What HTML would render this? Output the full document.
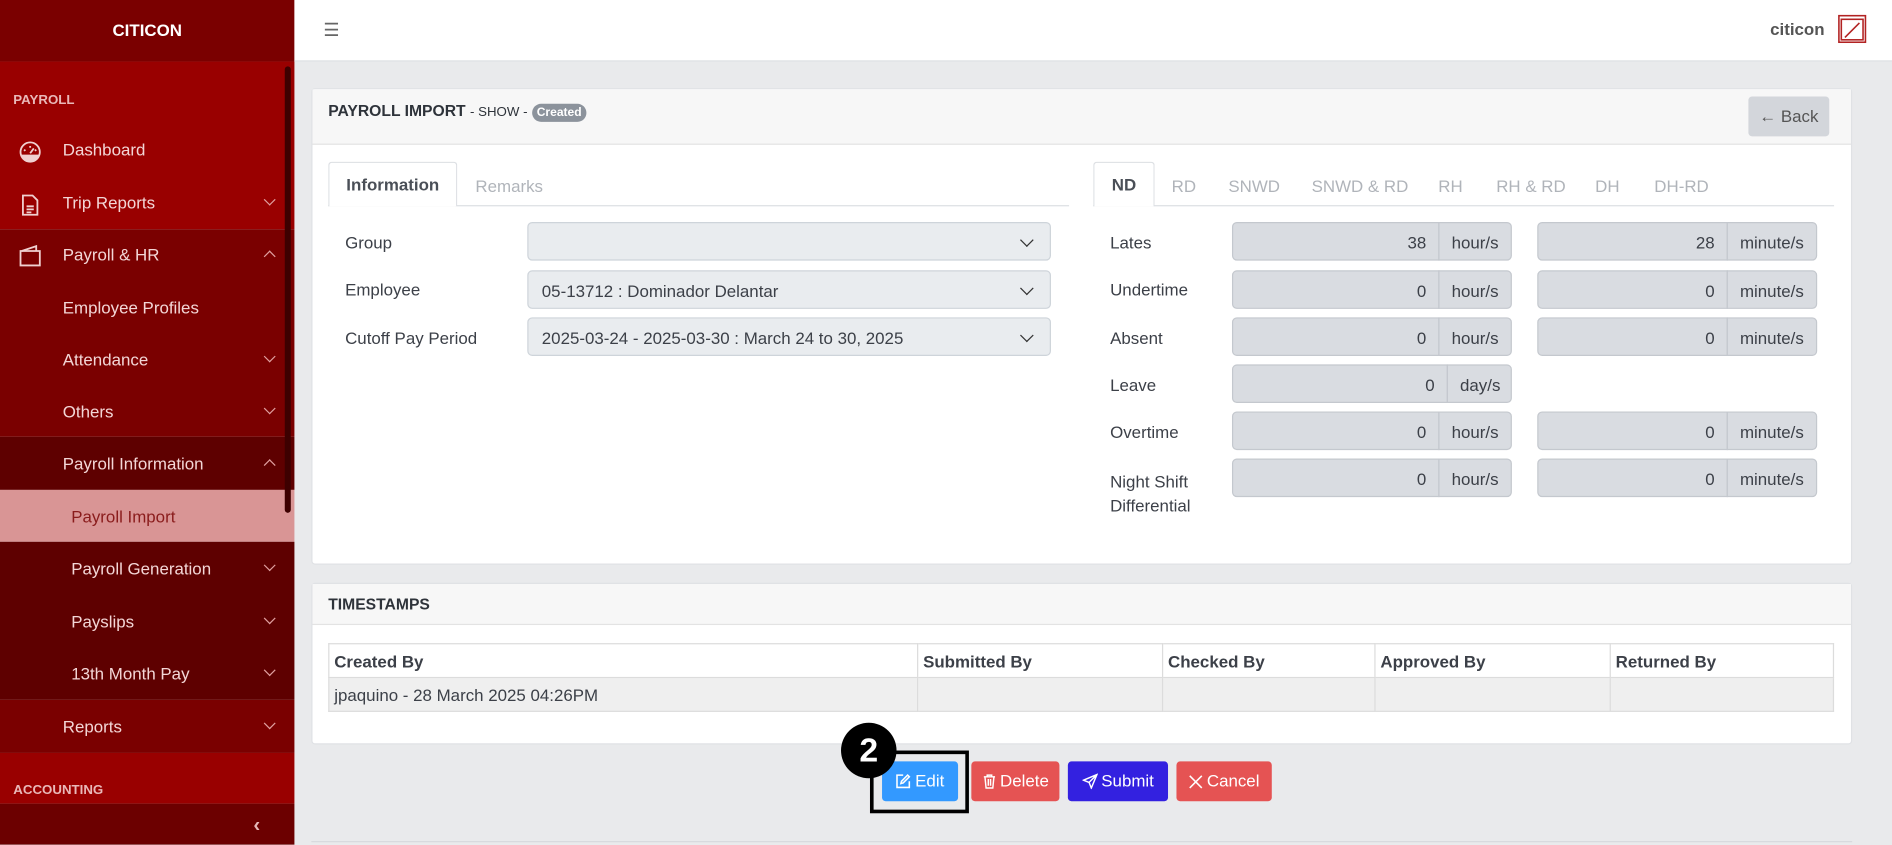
<!DOCTYPE html>
<html><head><meta charset="utf-8"><style>
*{box-sizing:border-box;margin:0;padding:0}
html,body{width:1892px;height:845px;overflow:hidden;background:#e9eaec;font-family:"Liberation Sans",sans-serif}
#w{position:absolute;left:0;top:0;width:1568px;height:700px;transform:scale(1.20663);transform-origin:0 0}
.a{position:absolute}
.sb div.r{position:absolute;left:0;width:244px}
.mi{position:absolute;color:#f3d6d6;font-size:14px}
.chev{position:absolute;left:220px;width:7px;height:7px;border-right:1px solid #e0a0a0;border-bottom:1px solid #e0a0a0}
.dn{transform:rotate(45deg)}
.up{transform:rotate(-135deg)}
.lbl{position:absolute;font-size:14px;color:#3c4048}
.sel{position:absolute;left:437px;width:434px;height:32px;background:#e9ecef;border:1px solid #ced4da;border-radius:4px;font-size:14px;color:#3c4048;padding:8px 11px}
.sel:after{content:"";position:absolute;right:15px;top:10px;width:7px;height:7px;border-right:1.5px solid #333;border-bottom:1.5px solid #333;transform:rotate(45deg)}
.in{position:absolute;height:32px;background:#d9dce1;border:1px solid #c4c8ce;font-size:14px;color:#3c4048;padding:8px 10px}
.num{text-align:right;border-radius:4px 0 0 4px}
.ad{border-radius:0 4px 4px 0;border-left:1px solid #c4c8ce}
.tab{position:absolute;top:146px;font-size:14px;color:#b0b4ba}
.btn{position:absolute;top:631px;height:33px;border-radius:3px;color:#fff;font-size:14px;line-height:33px;text-align:center}
.btn svg{vertical-align:-2px;margin-right:3px}
th,td{border:1px solid #dcdcdc;font-size:14px;color:#3c4048;text-align:left;padding:0 4px;height:28px}
th{font-weight:bold}
</style></head><body><div id="w">
<div class="sb">
<div class="r" style="top:0;height:51px;background:#7a0000"></div>
<div class="a" style="left:0;width:244px;top:17px;text-align:center;color:#fff;font-weight:bold;font-size:14px">CITICON</div>
<div class="r" style="top:51px;height:139px;background:#990000"></div>
<div class="r" style="top:190px;height:172px;background:#7a0000"></div>
<div class="r" style="top:362px;height:44px;background:#5e0000"></div>
<div class="r" style="top:406px;height:43px;background:#d99595"></div>
<div class="r" style="top:449px;height:131px;background:#5e0000"></div>
<div class="r" style="top:580px;height:44px;background:#7a0000"></div>
<div class="r" style="top:624px;height:42px;background:#990000"></div>
<div class="r" style="top:666px;height:34px;background:#6c0000"></div>
<div class="a" style="left:236px;top:55px;width:5px;height:370px;background:#3d0000;border-radius:3px"></div>
<div class="mi" style="left:11px;top:77px;font-size:11px;font-weight:bold;color:#e9b8b8">PAYROLL</div>
<div class="mi" style="left:11px;top:649px;font-size:11px;font-weight:bold;color:#e9b8b8">ACCOUNTING</div>
<svg class="a" style="left:15px;top:116px" width="20" height="20" viewBox="0 0 20 20" fill="none" stroke="#f0d0d0" stroke-width="1.5"><circle cx="10" cy="10" r="8"/><path d="M10 11l3-4M5 8l1 1M10 5v1.5M15 8l-1 1M3 13h14" /><path d="M3 13a8 8 0 0 0 14 0z" fill="#f0d0d0"/></svg>
<svg class="a" style="left:17px;top:160px" width="16" height="20" viewBox="0 0 16 20" fill="none" stroke="#f0d0d0" stroke-width="1.5"><path d="M2 2h8l4 4v12H2z"/><path d="M5 11h6M5 13.5h6M5 16h4"/></svg>
<svg class="a" style="left:15px;top:203px" width="20" height="18" viewBox="0 0 20 18" fill="none" stroke="#f0d0d0" stroke-width="1.5"><path d="M2 5h16v12H2z"/><path d="M3 5l12-4v4"/></svg>
<div class="mi" style="left:52px;top:116px">Dashboard</div>
<div class="mi" style="left:52px;top:160px">Trip Reports</div><div class="chev dn" style="top:162px"></div>
<div class="mi" style="left:52px;top:203px">Payroll &amp; HR</div><div class="chev up" style="top:209px"></div>
<div class="mi" style="left:52px;top:247px">Employee Profiles</div>
<div class="mi" style="left:52px;top:290px">Attendance</div><div class="chev dn" style="top:292px"></div>
<div class="mi" style="left:52px;top:333px">Others</div><div class="chev dn" style="top:335px"></div>
<div class="mi" style="left:52px;top:376px">Payroll Information</div><div class="chev up" style="top:382px"></div>
<div class="mi" style="left:59px;top:420px;color:#8a1c1c">Payroll Import</div>
<div class="mi" style="left:59px;top:463px">Payroll Generation</div><div class="chev dn" style="top:465px"></div>
<div class="mi" style="left:59px;top:507px">Payslips</div><div class="chev dn" style="top:509px"></div>
<div class="mi" style="left:59px;top:550px">13th Month Pay</div><div class="chev dn" style="top:552px"></div>
<div class="mi" style="left:52px;top:594px">Reports</div><div class="chev dn" style="top:596px"></div>
<div class="mi" style="left:210px;top:674px;font-size:17px;font-weight:bold;color:#e6b8b8">‹</div>
</div>
<div class="a" style="left:244px;top:0;width:1324px;height:51px;background:#fff;border-bottom:1px solid #dcdfe3"></div>
<div class="a" style="left:268px;top:16px;font-size:15px;color:#666">☰</div>
<div class="a" style="left:1467px;top:16px;font-size:14px;font-weight:bold;color:#555">citicon</div>
<svg class="a" style="left:1523px;top:12px" width="24" height="24" viewBox="0 0 24 24" fill="none" stroke="#b22222" stroke-width="1.3"><rect x="1" y="1" width="22" height="22"/><rect x="3" y="4" width="18" height="17"/><path d="M6 19l12-12"/></svg>

<div class="a" style="left:258px;top:73px;width:1277px;height:395px;background:#fff;border:1px solid #e0e2e5;border-radius:3px"></div>
<div class="a" style="left:259px;top:74px;width:1275px;height:46px;background:#f7f7f7;border-bottom:1px solid #e3e3e3"></div>
<div class="a" style="left:272px;top:84px;font-size:13px;font-weight:bold;color:#2e333a">PAYROLL IMPORT <span style="font-weight:normal;font-size:11px">- SHOW -</span> <span style="display:inline-block;background:#8c939c;color:#fff;font-size:10px;border-radius:8px;padding:2px 4px;font-weight:bold">Created</span></div>
<div class="a" style="left:1449px;top:80px;width:67px;height:33px;background:#d3d6db;border-radius:3px;color:#555;font-size:14px;text-align:center;line-height:33px">← Back</div>

<div class="a" style="left:272px;top:170px;width:614px;height:1px;background:#dcdfe3"></div>
<div class="a" style="left:272px;top:134px;width:107px;height:37px;background:#fff;border:1px solid #dcdfe3;border-bottom:none;border-radius:3px 3px 0 0;font-size:14px;font-weight:bold;color:#4a4f57;text-align:center;line-height:36px">Information</div>
<div class="tab" style="left:394px">Remarks</div>
<div class="lbl" style="left:286px;top:193px">Group</div><div class="sel" style="top:184px"></div>
<div class="lbl" style="left:286px;top:232px">Employee</div><div class="sel" style="top:224px">05-13712 : Dominador Delantar</div>
<div class="lbl" style="left:286px;top:272px">Cutoff Pay Period</div><div class="sel" style="top:263px">2025-03-24 - 2025-03-30 : March 24 to 30, 2025</div>

<div class="a" style="left:906px;top:170px;width:614px;height:1px;background:#dcdfe3"></div>
<div class="a" style="left:906px;top:134px;width:51px;height:37px;background:#fff;border:1px solid #dcdfe3;border-bottom:none;border-radius:3px 3px 0 0;font-size:14px;font-weight:bold;color:#4a4f57;text-align:center;line-height:36px">ND</div>
<div class="tab" style="left:971px">RD</div><div class="tab" style="left:1018px">SNWD</div><div class="tab" style="left:1087px">SNWD &amp; RD</div><div class="tab" style="left:1192px">RH</div><div class="tab" style="left:1240px">RH &amp; RD</div><div class="tab" style="left:1322px">DH</div><div class="tab" style="left:1371px">DH-RD</div>

<div class="lbl" style="left:920px;top:193px">Lates</div>
<div class="in num" style="left:1021px;top:184px;width:172px">38</div><div class="in ad" style="left:1192px;top:184px;width:61px">hour/s</div>
<div class="in num" style="left:1274px;top:184px;width:158px">28</div><div class="in ad" style="left:1431px;top:184px;width:75px">minute/s</div>
<div class="lbl" style="left:920px;top:232px">Undertime</div>
<div class="in num" style="left:1021px;top:224px;width:172px">0</div><div class="in ad" style="left:1192px;top:224px;width:61px">hour/s</div>
<div class="in num" style="left:1274px;top:224px;width:158px">0</div><div class="in ad" style="left:1431px;top:224px;width:75px">minute/s</div>
<div class="lbl" style="left:920px;top:272px">Absent</div>
<div class="in num" style="left:1021px;top:263px;width:172px">0</div><div class="in ad" style="left:1192px;top:263px;width:61px">hour/s</div>
<div class="in num" style="left:1274px;top:263px;width:158px">0</div><div class="in ad" style="left:1431px;top:263px;width:75px">minute/s</div>
<div class="lbl" style="left:920px;top:311px">Leave</div>
<div class="in num" style="left:1021px;top:302px;width:179px">0</div><div class="in ad" style="left:1199px;top:302px;width:54px">day/s</div>
<div class="lbl" style="left:920px;top:350px">Overtime</div>
<div class="in num" style="left:1021px;top:341px;width:172px">0</div><div class="in ad" style="left:1192px;top:341px;width:61px">hour/s</div>
<div class="in num" style="left:1274px;top:341px;width:158px">0</div><div class="in ad" style="left:1431px;top:341px;width:75px">minute/s</div>
<div class="lbl" style="left:920px;top:389px;line-height:20px">Night Shift<br>Differential</div>
<div class="in num" style="left:1021px;top:380px;width:172px">0</div><div class="in ad" style="left:1192px;top:380px;width:61px">hour/s</div>
<div class="in num" style="left:1274px;top:380px;width:158px">0</div><div class="in ad" style="left:1431px;top:380px;width:75px">minute/s</div>

<div class="a" style="left:258px;top:483px;width:1277px;height:134px;background:#fff;border:1px solid #e0e2e5;border-radius:3px"></div>
<div class="a" style="left:259px;top:484px;width:1275px;height:34px;background:#f7f7f7;border-bottom:1px solid #e3e3e3"></div>
<div class="a" style="left:272px;top:493px;font-size:13px;font-weight:bold;color:#2e333a">TIMESTAMPS</div>
<table class="a" style="left:272px;top:533px;width:1248px;border-collapse:collapse">
<tr><th style="width:488px">Created By</th><th style="width:203px">Submitted By</th><th style="width:176px">Checked By</th><th style="width:195px">Approved By</th><th>Returned By</th></tr>
<tr style="background:#efefef"><td>jpaquino - 28 March 2025 04:26PM</td><td></td><td></td><td></td><td></td></tr>
</table>

<div class="btn" style="left:731px;width:63px;background:#3399ff"><svg width="13" height="13" viewBox="0 0 14 14" fill="none" stroke="#fff" stroke-width="1.4"><path d="M7 1.5H1.5v11h11V7"/><path d="M11 1.5l1.5 1.5L7 8.5 5 9l.5-2z"/></svg>Edit</div>
<div class="btn" style="left:805px;width:73px;background:#e55353"><svg width="12" height="13" viewBox="0 0 12 14" fill="none" stroke="#fff" stroke-width="1.3"><path d="M1 3h10M4 3V1.5h4V3M2 3l1 10h6l1-10M5 5v6M7 5v6"/></svg>Delete</div>
<div class="btn" style="left:885px;width:83px;background:#3321e0"><svg width="13" height="13" viewBox="0 0 14 14" fill="none" stroke="#fff" stroke-width="1.3"><path d="M13 1L1 6l5 2 2 5z M13 1L6 8"/></svg>Submit</div>
<div class="btn" style="left:975px;width:79px;background:#e55353"><svg width="12" height="12" viewBox="0 0 12 12" fill="none" stroke="#fff" stroke-width="1.3"><path d="M1 1l10 10M11 1L1 11"/></svg>Cancel</div>
<div class="a" style="left:721px;top:622px;width:82px;height:52px;border:3px solid #000"></div>
<div class="a" style="left:697px;top:599px;width:46px;height:46px;border-radius:50%;background:#000;color:#fff;font-weight:bold;font-size:28px;text-align:center;line-height:46px">2</div>
<div class="a" style="left:258px;top:697px;width:1277px;height:1px;background:#d8dadd"></div>
</div></body></html>
